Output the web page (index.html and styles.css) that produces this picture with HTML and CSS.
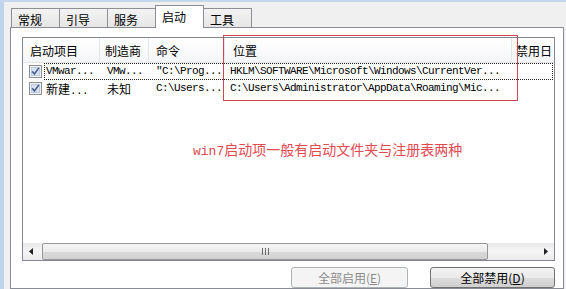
FILE: index.html
```html
<html>
<head>
    <meta charset="UTF-8"/>
    <title>系统配置 - 启动</title>
    <link rel="stylesheet" href="styles.css">
</head>
<body>
<div class="frame">
    <div class="edge"></div>
    <div class="dlg">
        <div class="tabs">
            <div class="tab">常规</div>
            <div class="tab">引导</div>
            <div class="tab">服务</div>
            <div class="tab on">启动</div>
            <div class="tab">工具</div>
        </div>
        <div class="panel">
            <div class="list">
                <div class="head">
                    <div class="hc c1">启动项目</div>
                    <div class="hc c2">制造商</div>
                    <div class="hc c3">命令</div>
                    <div class="hc c4">位置</div>
                    <div class="hc c5">禁用日</div>
                </div>
                <div class="row">
                    <svg class="chk" width="13" height="13" viewBox="0 0 13 13"><rect x="0.5" y="0.5" width="12" height="12" fill="#eef2f7" stroke="#8e8f8f"/><rect x="2.5" y="2.5" width="8" height="8" fill="#d8e3f0" stroke="#bccadb"/><path d="M3.2 6.4l2.3 2.6l4.3-6.1" fill="none" stroke="#4a5d8f" stroke-width="1.6"/></svg>
                    <div class="cells sel">
                        <div class="rc c1 a">VMwar...</div>
                        <div class="rc c2 a">VMw...</div>
                        <div class="rc c3 a">"C:\Prog...</div>
                        <div class="rc c4 a">HKLM\SOFTWARE\Microsoft\Windows\CurrentVer...</div>
                    </div>
                </div>
                <div class="row">
                    <svg class="chk" width="13" height="13" viewBox="0 0 13 13"><rect x="0.5" y="0.5" width="12" height="12" fill="#eef2f7" stroke="#8e8f8f"/><rect x="2.5" y="2.5" width="8" height="8" fill="#d8e3f0" stroke="#bccadb"/><path d="M3.2 6.4l2.3 2.6l4.3-6.1" fill="none" stroke="#4a5d8f" stroke-width="1.6"/></svg>
                    <div class="cells">
                        <div class="rc c1">新建<span class="a">...</span></div>
                        <div class="rc c2">未知</div>
                        <div class="rc c3 a">C:\Users...</div>
                        <div class="rc c4 a">C:\Users\Administrator\AppData\Roaming\Mic...</div>
                    </div>
                </div>
                <div class="note"><span class="m">win7</span>启动项一般有启动文件夹与注册表两种</div>
                <div class="hscroll">
                    <div class="arr">
                        <svg width="5" height="7" viewBox="0 0 5 7"><path d="M4 0v7L0 3.5z" fill="#222"/></svg>
                    </div>
                    <div class="thumb">
                        <svg width="7" height="7" viewBox="0 0 7 7"><path d="M0.5 0v7M3.5 0v7M6.5 0v7" stroke="#6b6b6b" stroke-width="1"/></svg>
                    </div>
                    <div class="track"></div>
                    <div class="arr">
                        <svg width="5" height="7" viewBox="0 0 5 7"><path d="M1 0v7L5 3.5z" fill="#222"/></svg>
                    </div>
                </div>
                <div class="mark"></div>
            </div>
            <div class="btns">
                <div class="btn off">全部启用(<u>E</u>)</div>
                <div class="btn">全部禁用(<u>D</u>)</div>
            </div>
        </div>
    </div>
</div>
</body>
</html>
```
FILE: styles.css
```css
body {
    margin: 0px;
    padding: 0px;
    font-family: "Noto Sans CJK SC", sans-serif;
    font-size: 12px;
    color: #000;
    background-color: #f0f0f0;
    overflow: hidden;
}

.frame {
    display: flex;
    height: 289px;
    box-sizing: border-box;
    border-top: 2px solid #c6d7ec;
    overflow: hidden;
}

.edge {
    flex: none;
    width: 4px;
    background-color: #bed3ec;
}

.dlg {
    flex: 1;
    min-width: 0px;
    display: flex;
    flex-direction: column;
    padding: 3px 2px 0px 6px;
}

/* tabs */
.tabs {
    display: flex;
    align-items: flex-end;
    height: 22px;
    padding-left: 1px;
    position: relative;
    z-index: 1;
}

.tab {
    width: 49px;
    height: 19px;
    margin-left: -1px;
    box-sizing: border-box;
    padding-left: 6px;
    line-height: 21px;
    border: 1px solid #8d8f94;
    border-bottom: none;
    background: linear-gradient(#f3f3f3, #e6e6e6);
}
.tab:first-child {
    margin-left: 0px;
}
.tab.on {
    height: 23px;
    margin-bottom: -1px;
    line-height: 21px;
    background: #fff;
}

.panel {
    height: 280px;
    box-sizing: border-box;
    padding: 9px 8px 0px 11px;
    border: 1px solid #898c95;
    background-color: #fff;
}

/* list view */
.list {
    position: relative;
    display: flex;
    flex-direction: column;
    height: 224px;
    box-sizing: border-box;
    border: 1px solid #828790;
}

.head {
    display: flex;
    height: 25px;
    box-sizing: border-box;
    border-bottom: 1px solid #e5e5e5;
    background: linear-gradient(#fff, #f4f5f7);
}

.hc {
    box-sizing: border-box;
    line-height: 26px;
    white-space: nowrap;
    overflow: hidden;
    border-right: 1px solid #e2e5e9;
}
.hc.c1 { width: 77px; padding-left: 7px; }
.hc.c2 { width: 49px; padding-left: 5px; }
.hc.c3 { width: 76px; padding-left: 7px; }
.hc.c4 { width: 287px; padding-left: 8px; }
.hc.c5 { flex: 1; padding-left: 4px; border-right: none; }

.row {
    display: flex;
    align-items: center;
    height: 17px;
}
.row:first-of-type {
    margin-top: 1px;
}

.chk {
    margin-left: 6px;
    flex: none;
}

.cells {
    display: flex;
    flex: 1;
    height: 15px;
    margin: 0px 1px 0px 2px;
    border: 1px dotted transparent;
}
.cells.sel {
    border-color: #222;
}

.rc {
    box-sizing: border-box;
    line-height: 15px;
    white-space: nowrap;
    overflow: hidden;
}
.rc.c1 { width: 55px; padding-left: 1px; }
.rc.c2 { width: 49px; padding-left: 7px; }
.rc.c3 { width: 76px; padding-left: 7px; }
.rc.c4 { width: 288px; padding-left: 5px; }

.a {
    font-family: "Liberation Mono", monospace;
    font-size: 11px;
    letter-spacing: -0.6px;
}

.note {
    flex: 1;
    margin-top: 44px;
    padding-left: 170px;
    font-size: 14px;
    line-height: 16px;
    color: #e34950;
}
.m {
    font-family: "Liberation Mono", monospace;
    font-size: 13px;
}

/* scroll bar */
.hscroll {
    display: flex;
    height: 17px;
    background: linear-gradient(#e9e9e9, #f4f4f4 40%, #f4f4f4 60%, #e9e9e9);
}

.arr {
    display: flex;
    align-items: center;
    justify-content: center;
    width: 17px;
}

.thumb {
    display: flex;
    align-items: center;
    justify-content: center;
    width: 446px;
    margin-left: 2px;
    box-sizing: border-box;
    border: 1px solid #979797;
    border-radius: 2px;
    background: linear-gradient(#f5f5f5, #ebebeb 50%, #d9d9d9 51%, #d2d2d2);
}

.track {
    flex: 1;
}

.mark {
    position: absolute;
    left: 200px;
    top: -3px;
    width: 295px;
    height: 66px;
    box-sizing: border-box;
    border: 1px solid #c94a52;
}

/* buttons */
.btns {
    display: flex;
    justify-content: flex-end;
    gap: 22px;
    margin-top: 6px;
}

.btn {
    width: 125px;
    height: 21px;
    box-sizing: border-box;
    text-align: center;
    line-height: 19px;
    border: 1px solid #707070;
    border-radius: 3px;
    background: linear-gradient(#f2f2f2, #ebebeb 50%, #dddddd 51%, #cfcfcf);
}
.btn.off {
    width: 117px;
    color: #8b8b8b;
    border-color: #adb2b5;
    background: #f4f4f4;
}
```
